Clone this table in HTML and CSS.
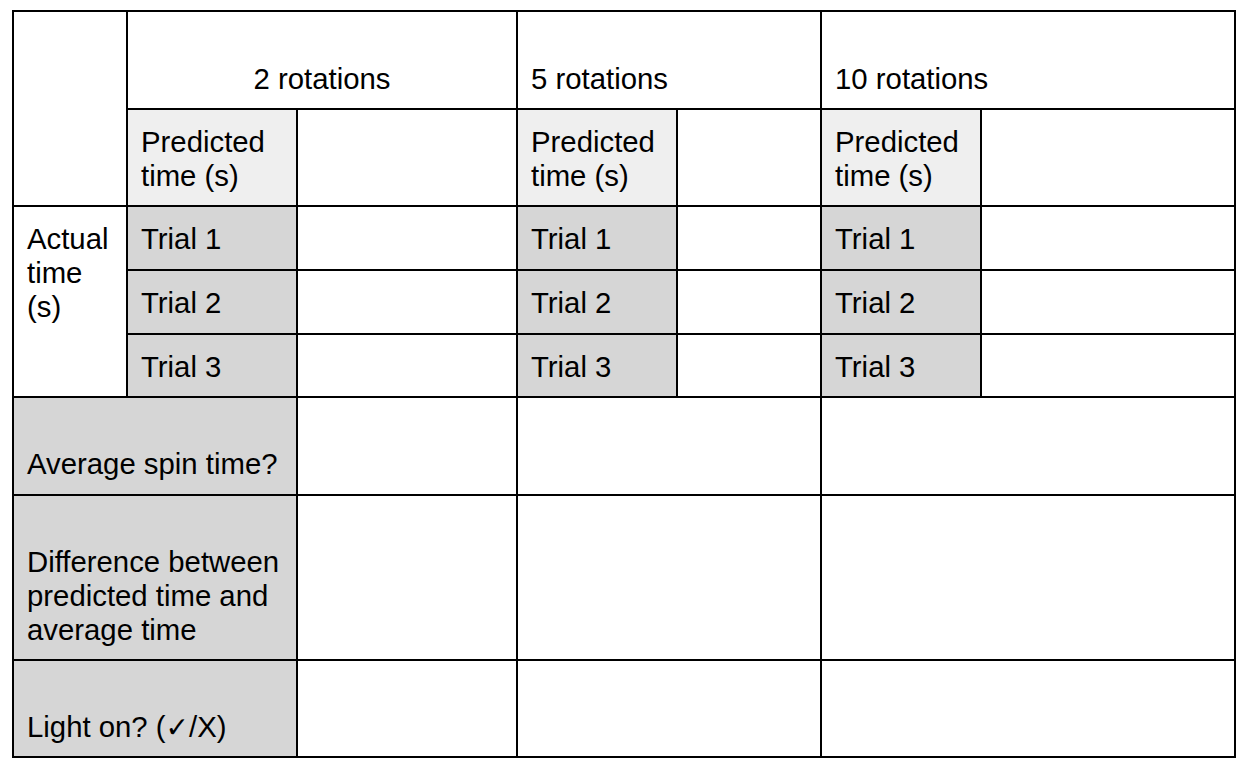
FILE: index.html
```html
<!DOCTYPE html>
<html lang="en">
<head>
<meta charset="utf-8">
<title>Rotations table</title>
<link rel="stylesheet" href="styles.css">
</head>
<body>
<table class="grid">
  <colgroup>
    <col class="c1"><col class="c2"><col class="c3"><col class="c4"><col class="c5"><col class="c6"><col class="c7">
  </colgroup>
  <tr class="r-head">
    <td rowspan="2"></td>
    <td colspan="2" class="head center">2 rotations</td>
    <td colspan="2" class="head">5 rotations</td>
    <td colspan="2" class="head">10 rotations</td>
  </tr>
  <tr class="r-pred">
    <td class="light">Predicted time (s)</td>
    <td></td>
    <td class="light">Predicted time (s)</td>
    <td></td>
    <td class="light">Predicted time (s)</td>
    <td></td>
  </tr>
  <tr class="r-t1">
    <td rowspan="3">Actual<br>time<br>(s)</td>
    <td class="dark">Trial 1</td>
    <td></td>
    <td class="dark">Trial 1</td>
    <td></td>
    <td class="dark">Trial 1</td>
    <td></td>
  </tr>
  <tr class="r-t2">
    <td class="dark">Trial 2</td>
    <td></td>
    <td class="dark">Trial 2</td>
    <td></td>
    <td class="dark">Trial 2</td>
    <td></td>
  </tr>
  <tr class="r-t3">
    <td class="dark">Trial 3</td>
    <td></td>
    <td class="dark">Trial 3</td>
    <td></td>
    <td class="dark">Trial 3</td>
    <td></td>
  </tr>
  <tr class="r-avg">
    <td colspan="2" class="dark low">Average spin time?</td>
    <td></td>
    <td colspan="2"></td>
    <td colspan="2"></td>
  </tr>
  <tr class="r-diff">
    <td colspan="2" class="dark low">Difference between<br>predicted time and<br>average time</td>
    <td></td>
    <td colspan="2"></td>
    <td colspan="2"></td>
  </tr>
  <tr class="r-light">
    <td colspan="2" class="dark low">Light on? (<span class="check">✓</span>/X)</td>
    <td></td>
    <td colspan="2"></td>
    <td colspan="2"></td>
  </tr>
</table>
</body>
</html>
```

FILE: styles.css
```css
html, body {
  margin: 0;
  padding: 0;
  background: #ffffff;
}

body {
  padding: 10px 0 0 12px;
  font-family: "Liberation Sans", Arial, sans-serif;
  font-size: 29.33px;
  line-height: 34px;
  color: #000000;
}

.grid {
  table-layout: fixed;
  border-collapse: separate;
  border-spacing: 0;
  width: 1224px;
  border-left: 2px solid #000;
  border-top: 2px solid #000;
}

.c1 { width: 114px; }
.c2 { width: 170px; }
.c3 { width: 220px; }
.c4 { width: 160px; }
.c5 { width: 144px; }
.c6 { width: 160px; }
.c7 { width: 254px; }

.grid td {
  box-sizing: border-box;
  border-right: 2px solid #000;
  border-bottom: 2px solid #000;
  padding: 15px 13px 0 13px;
  vertical-align: top;
  text-align: left;
  white-space: normal;
}

.r-head  { height: 98px; }
.r-pred  { height: 97px; }
.r-t1    { height: 64px; }
.r-t2    { height: 64px; }
.r-t3    { height: 63px; }
.r-avg   { height: 98px; }
.r-diff  { height: 165px; }
.r-light { height: 97px; }

.grid td.head {
  padding-top: 50px;
}

.grid td.center {
  text-align: center;
}

.grid td.low {
  padding-top: 49px;
}

.light {
  background: #efefef;
}

.dark {
  background: #d6d6d6;
}

.check {
  font-family: "DejaVu Sans", sans-serif;
  font-weight: bold;
  font-size: 28px;
}
```
